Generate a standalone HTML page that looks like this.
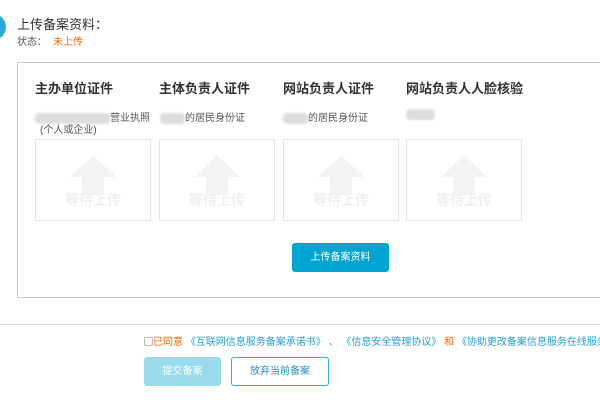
<!DOCTYPE html>
<html><head><meta charset="utf-8"><style>
html,body{margin:0;width:600px;height:400px;overflow:hidden}
body{background:#fff;font-family:"Liberation Sans","Noto Sans CJK SC",sans-serif;position:relative}
.wrap{position:absolute;left:0;top:0;width:600px;height:400px;overflow:hidden}
.a{position:absolute;white-space:nowrap}
.card{position:absolute;top:139px;width:114px;height:80px;border:1px solid #e3e3e3}
.card svg{position:absolute;left:34px;top:15px}
.card span{position:absolute;left:0;right:0;top:50px;text-align:center;font-size:14px;color:#efefef;font-weight:bold}
.t{font-size:13px;font-weight:bold;color:#333;top:78px}
.b{top:109px;font-size:10px;color:#555}
.blur{display:inline-block;background:#ddd;border-radius:4px;height:11px;vertical-align:middle;filter:blur(1px)}
</style></head><body><div class="wrap">
<div class="a" style="left:-20px;top:14px;width:26px;height:26px;border-radius:50%;background:#29a8e0"></div>
<div class="a" style="left:17px;top:14px;font-size:13px;color:#333">上传备案资料：</div>
<div class="a" style="left:17px;top:33px;font-size:10px;color:#555">状态：<span style="color:#f60;margin-left:6px">未上传</span></div>
<div class="a" style="left:17px;top:62px;width:600px;height:234px;border:1px solid #ccc"></div>
<div class="a t" style="left:35px">主办单位证件</div>
<div class="a t" style="left:159px">主体负责人证件</div>
<div class="a t" style="left:283px">网站负责人证件</div>
<div class="a t" style="left:406px">网站负责人人脸核验</div>
<div class="a b" style="left:35px"><span class="blur" style="width:75px"></span>营业执照</div>
<div class="a b" style="left:40px;top:121px">(个人或企业)</div>
<div class="a b" style="left:160px"><span class="blur" style="width:25px"></span>的居民身份证</div>
<div class="a b" style="left:283px"><span class="blur" style="width:25px"></span>的居民身份证</div>
<div class="a b" style="left:406px"><span class="blur" style="width:29px"></span></div>
<div class="card" style="left:35px"><svg width="48" height="40"><path d="M23 0L46 22H34V40H12V22H0Z" fill="#f3f3f3"/></svg><span>等待上传</span></div>
<div class="card" style="left:159px"><svg width="48" height="40"><path d="M23 0L46 22H34V40H12V22H0Z" fill="#f3f3f3"/></svg><span>等待上传</span></div>
<div class="card" style="left:283px"><svg width="48" height="40"><path d="M23 0L46 22H34V40H12V22H0Z" fill="#f3f3f3"/></svg><span>等待上传</span></div>
<div class="card" style="left:406px"><svg width="48" height="40"><path d="M23 0L46 22H34V40H12V22H0Z" fill="#f3f3f3"/></svg><span>等待上传</span></div>
<div class="a" style="left:292px;top:243px;width:97px;height:29px;background:#00a5d1;border-radius:3px;color:#fff;font-size:10px;text-align:center;line-height:29px">上传备案资料</div>
<div class="a" style="left:0;top:324px;width:600px;height:1px;background:#ddd"></div>
<div class="a" style="left:144px;top:333px;width:456px;overflow:hidden;font-size:10px;color:#2a9fd0"><span style="display:inline-block;width:7px;height:7px;border:1px solid #bbb;border-radius:2px;vertical-align:-1px"></span><span style="color:#f60">已同意</span> 《互联网信息服务备案承诺书》 <span style="color:#f60">、</span> 《信息安全管理协议》 <span style="color:#f60">和</span> 《协助更改备案信息服务在线服务协议》</div>
<div class="a" style="left:144px;top:357px;width:77px;height:29px;background:#99dbec;border-radius:3px;color:#fff;font-size:10px;text-align:center;line-height:29px">提交备案</div>
<div class="a" style="left:231px;top:357px;width:96px;height:27px;border:1px solid #3aa8d8;border-radius:3px;color:#2a8fc0;font-size:10px;text-align:center;line-height:27px">放弃当前备案</div>
</div></body></html>
